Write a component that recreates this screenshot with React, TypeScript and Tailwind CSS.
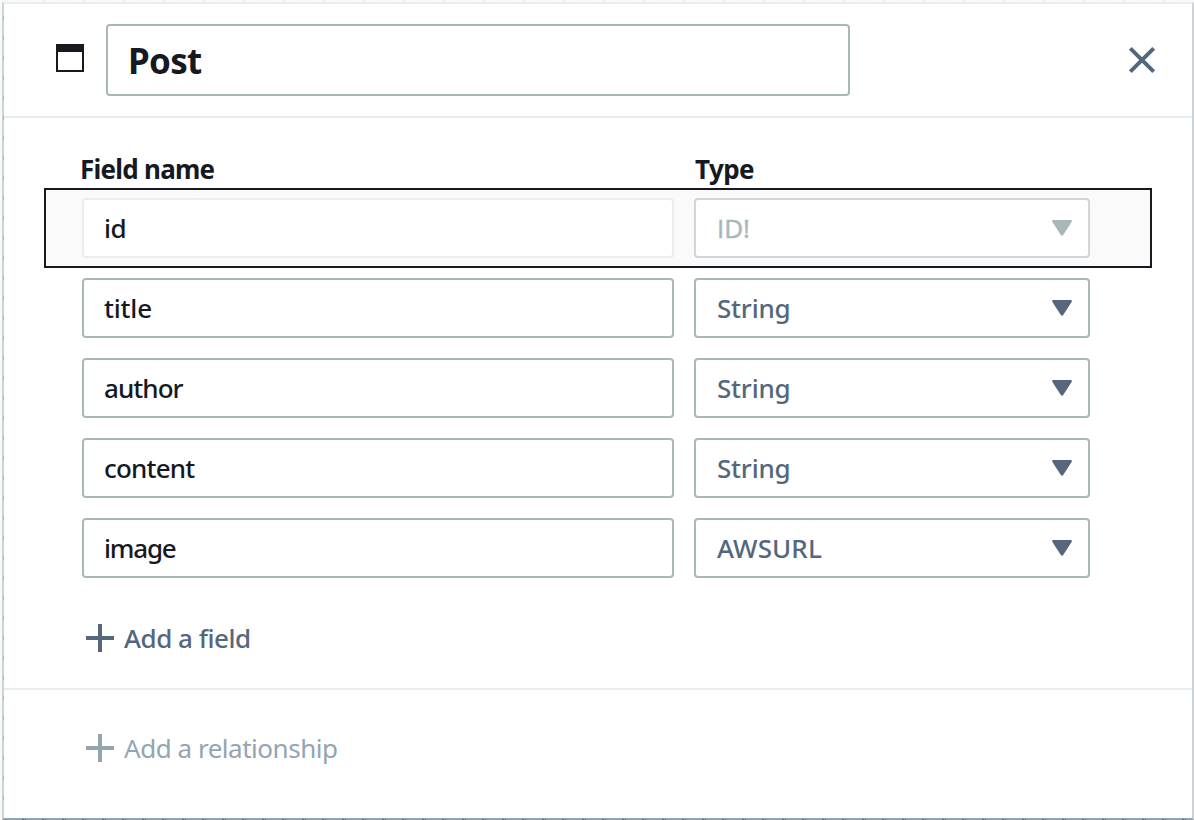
import type { ReactNode } from "react";

type Field = { name: string; type: string; locked?: boolean; nameTracking: string; typeTracking: string };

const fields: Field[] = [
  { name: "id", type: "ID!", locked: true, nameTracking: "tracking-[-0.6px]", typeTracking: "tracking-[-0.1px]" },
  { name: "title", type: "String", nameTracking: "tracking-[-0.2px]", typeTracking: "tracking-[-0.2px]" },
  { name: "author", type: "String", nameTracking: "tracking-[-0.95px]", typeTracking: "tracking-[-0.2px]" },
  { name: "content", type: "String", nameTracking: "tracking-[-0.8px]", typeTracking: "tracking-[-0.2px]" },
  { name: "image", type: "AWSURL", nameTracking: "tracking-[-1.2px]", typeTracking: "tracking-[0.1px]" },
];

function Caret({ className }: { className: string }) {
  return (
    <svg className={className} width="20" height="16" viewBox="0 0 20 16" fill="currentColor" aria-hidden="true">
      <path d="M1 0H19Q20.4 .5 19.6 2L11.5 14.6Q10 17 8.5 14.6L.4 2Q-.4 .5 1 0Z" />
    </svg>
  );
}

function FieldRow({ field }: { field: Field }) {
  return (
    <div
      className={
        field.locked
          ? "flex h-20 items-center gap-5 border-2 border-[#16191f] bg-[#fafafa] pl-9"
          : "flex h-20 items-center gap-5 pl-[38px]"
      }
    >
      <div
        className={`flex h-[60px] w-[592px] items-center rounded border-2 bg-white px-5 font-medium text-[#16191f] ${
          field.locked ? "border-[#eaeded]" : "border-[#aab7b8]"
        }`}
      >
        <span className={field.nameTracking}>{field.name}</span>
      </div>
      <div
        className={`flex h-[60px] w-[396px] items-center justify-between rounded border-2 bg-white pr-4 pl-[21px] ${
          field.locked ? "border-[#d0d7db]" : "border-[#aab7b8]"
        }`}
      >
        <span
          className={`font-medium ${field.typeTracking} ${
            field.locked
              ? "font-['Open_Sans',sans-serif] text-[#aab7b8] [-webkit-text-stroke:0.5px_#aab7b8]"
              : "text-[#54677c]"
          }`}
        >
          {field.type}
        </span>
        <Caret className={field.locked ? "text-[#aab7b8]" : "text-[#54677c]"} />
      </div>
    </div>
  );
}

function AddAction({ className, children }: { className: string; children: ReactNode }) {
  return (
    <button className={`flex h-9 items-center gap-[10px] ${className}`}>
      <svg width="28" height="28" viewBox="0 0 28 28" stroke="currentColor" strokeWidth="4" aria-hidden="true">
        <path d="M14 0V28M0 14H28" />
      </svg>
      {children}
    </button>
  );
}

export default function App() {
  return (
    <div className="h-[820px] w-[1194px] overflow-hidden bg-[#f8f9f9] bg-[linear-gradient(#f8f9f9_1px,transparent_1px),linear-gradient(90deg,#eaeded_2px,transparent_2px)] bg-size-[20px_20px] bg-position-[0px_1px,3px_0px] pt-0.5 pl-0.5 font-['Noto_Sans',sans-serif] text-[26px] leading-9">
      <main className="relative flex h-[818px] w-[1192px] flex-col border-2 border-t-[#eaeded] border-r-[#ccd3d8] border-b-[#90a3b0] border-l-[#ccd3d8] bg-white">
        {/* Canvas grid marks showing through the panel edges */}
        <span className="absolute top-3 -left-px h-[800px] w-px bg-[linear-gradient(#aab7b8_4px,transparent_4px)] bg-size-[1px_20px]" />
        <span className="absolute -bottom-0.5 left-[18px] h-px w-[1168px] bg-[linear-gradient(90deg,#54677c_2px,transparent_2px,transparent_3px,#54677c_3px,#54677c_4px,transparent_4px)] bg-size-[20px_1px]" />
        <header className="flex h-[114px] shrink-0 items-center border-b-2 border-[#eaeded] pr-9 pl-[52px]">
          <svg className="-mt-1" width="28" height="28" viewBox="0 0 28 28" aria-hidden="true">
            <rect x="1" y="1" width="26" height="26" fill="none" stroke="#16191f" strokeWidth="2" />
            <rect width="28" height="8" fill="#16191f" />
          </svg>
          <div className="ml-[22px] flex h-[72px] w-[744px] items-center rounded border-2 border-[#aab7b8] px-5 pt-0.5 text-[35px] font-bold text-[#16191f]">
            <span className="tracking-[-0.7px]">Post</span>
          </div>
          <button aria-label="Close" className="ml-auto text-[#54677c]">
            <svg width="28" height="28" viewBox="0 0 28 28" stroke="currentColor" strokeWidth="4" aria-hidden="true">
              <path d="M2.3 2.3L25.7 25.7M25.7 2.3L2.3 25.7" />
            </svg>
          </button>
        </header>
        <section className="h-[572px] shrink-0 border-b-2 border-[#eaeded] pt-[33px] pr-10 pl-10">
          <div className="flex h-[37px] gap-5 pl-9 font-bold text-[#16191f]">
            <span className="w-[595px]">
              <span className="tracking-[-0.75px]">Field name</span>
            </span>
            <span className="tracking-[-0.6px]">Type</span>
          </div>
          <div className="flex flex-col">
            {fields.map((field) => (
              <FieldRow key={field.name} field={field} />
            ))}
          </div>
          <AddAction className="mt-8 ml-[42px] font-medium text-[#54677c]">
            <span className="tracking-[-0.5px]">Add a field</span>
          </AddAction>
        </section>
        <footer className="pt-10 pl-[82px]">
          <AddAction className="text-[#92a5b2]">
            <span className="tracking-[-0.47px]">Add a relationship</span>
          </AddAction>
        </footer>
      </main>
    </div>
  );
}
